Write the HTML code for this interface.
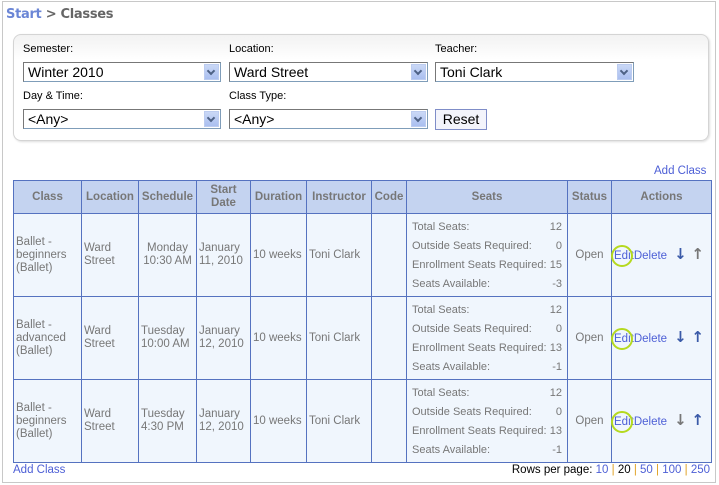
<!DOCTYPE html>
<html><head><meta charset="utf-8"><style>
*{margin:0;padding:0;box-sizing:border-box}
body{width:719px;height:485px;background:#fff;font-family:"Liberation Sans",sans-serif;font-size:11px;color:#666;position:relative;overflow:hidden}
.a{position:absolute}
.page{left:2px;top:1px;width:714px;height:482px;border:1px solid #c8c8c8}
.crumb{left:6px;top:7px;font-weight:bold;font-size:13px;color:#666;font-family:"DejaVu Sans",sans-serif;letter-spacing:-0.3px}
.crumb span{color:#6b86d6}
.filt{left:13px;top:34px;width:696px;height:107px;border:1px solid #d4d4d4;border-radius:8px;background:linear-gradient(#f2f2f2,#fff 25px);box-shadow:1px 1px 2px #ddd}
.lbl{font-family:"Liberation Sans",sans-serif;font-size:11px;color:#000}
.sel{height:20px;border:1px solid #7f9db9;border-top-color:#777;border-left-color:#777;background:#fff;font-family:"Liberation Sans",sans-serif;font-size:14px;color:#000;padding:1px 4px;line-height:17px}
.sel i{position:absolute;right:1px;top:1px;width:15px;height:16px;background:linear-gradient(#cad8f6,#aabff0);border:1px solid #bcccf0}
.sel i:after{content:"";position:absolute;left:3px;top:3px;width:4px;height:4px;border-right:2px solid #4d6185;border-bottom:2px solid #4d6185;transform:rotate(45deg)}
.btn{left:435px;top:109px;width:52px;height:21px;border:1px solid #7f8dc8;background:#f3f4fb;font-family:"Liberation Sans",sans-serif;font-size:14px;color:#000;text-align:center;line-height:19px}
.lnk{color:#4d5fd6;font-size:11.5px}
table.m{position:absolute;left:13px;top:180px;border-collapse:collapse;table-layout:fixed;width:698px}
.m>tbody>tr>td,.m>tbody>tr>th{border:1px solid #5572c0;font-size:11.5px;line-height:13px}
th{background:#c4d3f0;color:#777;height:33px;font-weight:bold}
.m>tbody>tr>td{background:#f0f6fd;height:83px;padding:0 2px;color:#777}
td.c{text-align:center}
.st{position:relative;height:76px;white-space:nowrap;font-size:11px}
.st div{position:absolute;left:3px;right:3px;height:19px}
.st div span{position:absolute;right:0}
.ed{position:relative;color:#4d5fd6}
.ed b{position:absolute;left:-3px;top:-5px;width:22px;height:22px;border:2px solid #b5d91f;border-radius:50%;font-weight:normal}
.ar{display:inline-block;width:14px;text-align:center;font-weight:bold;font-size:15px;font-family:"DejaVu Sans",sans-serif}
</style></head><body>
<div class="a page"></div>
<div class="a crumb"><span>Start</span> &gt; Classes</div>
<div class="a filt"></div>
<div class="a lbl" style="left:23px;top:43px">Semester:</div>
<div class="a lbl" style="left:229px;top:43px">Location:</div>
<div class="a lbl" style="left:435px;top:43px">Teacher:</div>
<div class="a sel" style="left:23px;top:62px;width:198px">Winter 2010<i></i></div>
<div class="a sel" style="left:229px;top:62px;width:199px">Ward Street<i></i></div>
<div class="a sel" style="left:435px;top:62px;width:199px">Toni Clark<i></i></div>
<div class="a lbl" style="left:23px;top:90px">Day &amp; Time:</div>
<div class="a lbl" style="left:229px;top:90px">Class Type:</div>
<div class="a sel" style="left:23px;top:109px;width:198px">&lt;Any&gt;<i></i></div>
<div class="a sel" style="left:229px;top:109px;width:199px">&lt;Any&gt;<i></i></div>
<div class="a btn">Reset</div>
<div class="a lnk" style="left:654px;top:165px">Add Class</div>
<table class="m">
<colgroup><col style="width:68px"><col style="width:57px"><col style="width:58px"><col style="width:54px"><col style="width:56px"><col style="width:65px"><col style="width:35px"><col style="width:161px"><col style="width:44px"><col style="width:100px"></colgroup>
<tr><th>Class</th><th>Location</th><th>Schedule</th><th>Start Date</th><th>Duration</th><th>Instructor</th><th>Code</th><th>Seats</th><th>Status</th><th>Actions</th></tr>
<tr><td>Ballet - beginners (Ballet)</td><td>Ward Street</td><td class="c">Monday 10:30 AM</td><td>January 11, 2010</td><td>10 weeks</td><td>Toni Clark</td><td></td><td><div class="st"><div style="top:4px">Total Seats:<span>12</span></div><div style="top:23px">Outside Seats Required:<span>0</span></div><div style="top:42px">Enrollment Seats Required:<span>15</span></div><div style="top:61px">Seats Available:<span>-3</span></div></div></td><td class="c">Open</td><td style="white-space:nowrap"><span class="ed">Edit<b></b></span><span class="lnk">Delete</span> &nbsp;<span class="ar" style="color:#3a5aa8">↓</span> <span class="ar" style="color:#777">↑</span></td></tr>
<tr><td>Ballet - advanced (Ballet)</td><td>Ward Street</td><td>Tuesday 10:00 AM</td><td>January 12, 2010</td><td>10 weeks</td><td>Toni Clark</td><td></td><td><div class="st"><div style="top:4px">Total Seats:<span>12</span></div><div style="top:23px">Outside Seats Required:<span>0</span></div><div style="top:42px">Enrollment Seats Required:<span>13</span></div><div style="top:61px">Seats Available:<span>-1</span></div></div></td><td class="c">Open</td><td style="white-space:nowrap"><span class="ed">Edit<b></b></span><span class="lnk">Delete</span> &nbsp;<span class="ar" style="color:#3a5aa8">↓</span> <span class="ar" style="color:#3a5aa8">↑</span></td></tr>
<tr><td>Ballet - beginners (Ballet)</td><td>Ward Street</td><td>Tuesday 4:30 PM</td><td>January 12, 2010</td><td>10 weeks</td><td>Toni Clark</td><td></td><td><div class="st"><div style="top:4px">Total Seats:<span>12</span></div><div style="top:23px">Outside Seats Required:<span>0</span></div><div style="top:42px">Enrollment Seats Required:<span>13</span></div><div style="top:61px">Seats Available:<span>-1</span></div></div></td><td class="c">Open</td><td style="white-space:nowrap"><span class="ed">Edit<b></b></span><span class="lnk">Delete</span> &nbsp;<span class="ar" style="color:#777">↓</span> <span class="ar" style="color:#3a5aa8">↑</span></td></tr>
</table>
<div class="a lnk" style="left:13px;top:464px">Add Class</div>
<div class="a" style="right:9px;top:464px;color:#000;font-size:11.5px">Rows per page: <span class="lnk">10</span> <span style="color:#e0a020">|</span> 20 <span style="color:#e0a020">|</span> <span class="lnk">50</span> <span style="color:#e0a020">|</span> <span class="lnk">100</span> <span style="color:#e0a020">|</span> <span class="lnk">250</span></div>
</body></html>
